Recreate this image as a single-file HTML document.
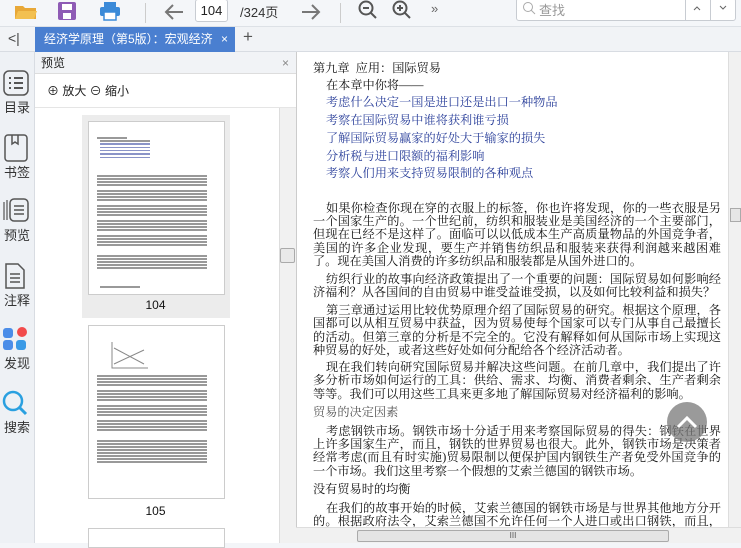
<!DOCTYPE html>
<html><head><meta charset="utf-8"><style>
*{margin:0;padding:0;box-sizing:border-box}
body{width:741px;height:543px;overflow:hidden;background:#f3f5f8;font-family:"Liberation Sans","Noto Sans CJK SC",sans-serif;position:relative}
.abs{position:absolute}
.tb{left:0;top:0;width:741px;height:27px;background:#f4f6f9;border-bottom:1px solid #dde1e6}
.tabbar{left:0;top:27px;width:741px;height:25px;background:#f1f3f6;border-bottom:1px solid #d8dce2}
.side{left:0;top:52px;width:35px;height:491px;background:#eef1f5;border-right:1px solid #d8dce2}
.sl{position:absolute;left:0;width:34px;text-align:center;font-size:13px;color:#333}
.prev{left:35px;top:52px;width:261px;height:491px;background:#fff}
.doc{left:296px;top:52px;width:432px;height:475px;background:#fff;border-left:1px solid #ccc}
.t{font-family:"Liberation Serif","Noto Serif CJK SC",serif;font-size:12.2px;color:#111;position:absolute;left:313px;width:408px;text-align:justify;text-align-last:justify;line-height:14px;height:14px;overflow:hidden}
.b{color:#2a3f9a;text-align-last:left}
.l{text-align-last:left}
.i{left:326px;width:395px}
.mini{position:absolute;height:1.5px;background:#777}
</style></head><body>
<div class="abs tb">
 <svg class="abs" style="left:14px;top:2px" width="24" height="18"><path d="M1 4h8l2 2h11v11H1z" fill="#e8a838"/><path d="M4 9h19l-3 8H1z" fill="#f3c050"/></svg>
 <svg class="abs" style="left:57px;top:1px" width="20" height="20"><rect x="1" y="1" width="18" height="18" rx="2" fill="#8e5bb5"/><rect x="5" y="3" width="10" height="6" fill="#fff"/><rect x="6" y="12" width="8" height="6" fill="#fff"/></svg>
 <svg class="abs" style="left:99px;top:1px" width="22" height="20"><rect x="5" y="1" width="12" height="6" fill="#3b8ad8"/><rect x="1" y="6" width="20" height="9" rx="2" fill="#3b8ad8"/><rect x="5" y="11" width="12" height="8" fill="#fff" stroke="#3b8ad8" stroke-width="1.5"/></svg>
 <div class="abs" style="left:145px;top:3px;width:1px;height:20px;background:#ccc"></div>
 <svg class="abs" style="left:163px;top:3px" width="22" height="18"><path d="M20 9H3M10 2L3 9l7 7" stroke="#777" stroke-width="2" fill="none"/></svg>
 <div class="abs" style="left:195px;top:-1px;width:33px;height:23px;background:#fff;border:1px solid #c8ccd2;border-radius:3px;font-size:13px;text-align:center;line-height:22px;color:#222">104</div>
 <div class="abs" style="left:240px;top:2px;font-size:13px;color:#333">/324页</div>
 <svg class="abs" style="left:300px;top:3px" width="22" height="18"><path d="M2 9h17M12 2l7 7-7 7" stroke="#777" stroke-width="2" fill="none"/></svg>
 <div class="abs" style="left:340px;top:3px;width:1px;height:20px;background:#ccc"></div>
 <svg class="abs" style="left:358px;top:0" width="20" height="20"><circle cx="8" cy="8" r="6.5" stroke="#555" stroke-width="2" fill="none"/><path d="M5 8h6M13 13l5 5" stroke="#555" stroke-width="2"/></svg>
 <svg class="abs" style="left:392px;top:0" width="20" height="20"><circle cx="8" cy="8" r="6.5" stroke="#555" stroke-width="2" fill="none"/><path d="M5 8h6M8 5v6M13 13l5 5" stroke="#555" stroke-width="2"/></svg>
 <div class="abs" style="left:431px;top:1px;font-size:13px;color:#666">»</div>
 <div class="abs" style="left:516px;top:-2px;width:220px;height:23px;background:#fff;border:1px solid #c8ccd2;border-radius:3px"></div>
 <svg class="abs" style="left:522px;top:1px" width="14" height="14"><circle cx="6" cy="6" r="4.5" stroke="#aaa" fill="none"/><path d="M9 9l4 4" stroke="#aaa"/></svg>
 <div class="abs" style="left:539px;top:0px;font-size:13px;color:#999">查找</div>
 <div class="abs" style="left:685px;top:-2px;width:1px;height:23px;background:#c8ccd2"></div>
 <div class="abs" style="left:710px;top:-2px;width:1px;height:23px;background:#c8ccd2"></div>
 <svg class="abs" style="left:692px;top:4px" width="10" height="8"><path d="M2 6l3-3 3 3" stroke="#666" fill="none"/></svg>
 <svg class="abs" style="left:718px;top:4px" width="10" height="8"><path d="M2 2l3 3 3-3" stroke="#666" fill="none"/></svg>
</div>
<div class="abs tabbar">
 <div class="abs" style="left:8px;top:3px;font-size:14px;color:#444">&lt;|</div>
 <div class="abs" style="left:35px;top:0;width:200px;height:25px;background:#4a7fd0;color:#fff;font-size:12px;line-height:25px;padding-left:9px;white-space:nowrap;overflow:hidden">经济学原理（第5版）：宏观经济<span class="abs" style="left:186px;top:0">×</span></div>
 <div class="abs" style="left:243px;top:0;font-size:17px;color:#555">+</div>
</div>
<div class="abs side">
 <svg class="abs" style="left:3px;top:18px" width="26" height="26"><rect x="1" y="1" width="24" height="24" rx="5" stroke="#555" stroke-width="1.5" fill="none"/><path d="M6 8h2M11 8h9M6 13h2M11 13h9M6 18h2M11 18h9" stroke="#555" stroke-width="2"/></svg>
 <div class="sl" style="top:45px">目录</div>
 <svg class="abs" style="left:4px;top:82px" width="24" height="28"><rect x="1" y="1" width="22" height="26" rx="3" stroke="#555" stroke-width="1.5" fill="none"/><path d="M8 1v9l3-2 3 2V1" stroke="#555" stroke-width="1.5" fill="none"/></svg>
 <div class="sl" style="top:110px">书签</div>
 <svg class="abs" style="left:3px;top:145px" width="26" height="26"><path d="M1 5v18M4 3v20" stroke="#555" stroke-width="1.2"/><rect x="7" y="2" width="18" height="22" rx="4" stroke="#555" stroke-width="1.5" fill="none"/><path d="M11 9h10M11 13h10M11 17h10" stroke="#555" stroke-width="1.5"/></svg>
 <div class="sl" style="top:173px">预览</div>
 <svg class="abs" style="left:4px;top:210px" width="22" height="28"><path d="M2 2h12l6 6v18H2z" stroke="#555" stroke-width="1.5" fill="none"/><path d="M6 12h10M6 16h10M6 20h10" stroke="#555" stroke-width="1.5"/></svg>
 <div class="sl" style="top:238px">注释</div>
 <svg class="abs" style="left:2px;top:274px" width="26" height="26"><rect x="1" y="2" width="10" height="10" rx="3" fill="#4b8de8"/><circle cx="20" cy="6" r="5" fill="#f24b4b"/><rect x="1" y="14" width="10" height="10" rx="3" fill="#4b8de8"/><rect x="14" y="14" width="10" height="10" rx="3" fill="#3a9ae6"/></svg>
 <div class="sl" style="top:301px">发现</div>
 <svg class="abs" style="left:2px;top:338px" width="26" height="28"><circle cx="11" cy="11" r="9" stroke="#2aa0e0" stroke-width="2.5" fill="none"/><path d="M18 18l6 6" stroke="#2aa0e0" stroke-width="3"/></svg>
 <div class="sl" style="top:365px">搜索</div>
</div>
<div class="abs prev">
 <div class="abs" style="left:0;top:0;width:261px;height:22px;background:#f1f3f6;border-bottom:1px solid #ddd;font-size:12px;line-height:22px;padding-left:6px;color:#222">预览<span class="abs" style="left:247px;top:0;color:#888">×</span></div>
 <div class="abs" style="left:12px;top:30px;font-size:12px;color:#222">⊕ 放大 ⊖ 缩小</div>
 <div class="abs" style="left:0;top:55px;width:261px;height:1px;background:#e5e5e5"></div>
 <div class="abs" style="left:244px;top:56px;width:17px;height:435px;background:#f1f1f1;border-left:1px solid #ddd"></div>
 <div class="abs" style="left:245px;top:196px;width:15px;height:15px;background:#e9e9e9;border:1px solid #aaa;border-radius:2px"></div>
 <div class="abs" style="left:47px;top:63px;width:148px;height:203px;background:#ececec"></div>
 <div class="abs" style="left:53px;top:69px;width:137px;height:174px;background:#fff;border:1px solid #ccc"></div>
 <div class="abs" style="left:0;top:246px;width:241px;text-align:center;font-size:12px;color:#111">104</div>
 <div class="abs" style="left:53px;top:273px;width:137px;height:174px;background:#fff;border:1px solid #ccc"></div>
 <div class="abs" style="left:0;top:452px;width:241px;text-align:center;font-size:12px;color:#111">105</div>
 <div class="abs" style="left:53px;top:476px;width:137px;height:20px;background:#fff;border:1px solid #ccc"></div>
</div>
<div class="abs doc"></div>
<div id="m"></div>
<div class="t l" style="top:61px">第九章&nbsp;&nbsp;应用：国际贸易</div>
<div class="t l i" style="top:78px">在本章中你将——</div>
<div class="t b i" style="top:95px">考虑什么决定一国是进口还是出口一种物品</div>
<div class="t b i" style="top:113px">考察在国际贸易中谁将获利谁亏损</div>
<div class="t b i" style="top:131px">了解国际贸易赢家的好处大于输家的损失</div>
<div class="t b i" style="top:149px">分析税与进口限额的福利影响</div>
<div class="t b i" style="top:166px">考察人们用来支持贸易限制的各种观点</div>
<div class="t i" style="top:201px">如果你检查你现在穿的衣服上的标签，你也许将发现，你的一些衣服是另</div>
<div class="t" style="top:214px">一个国家生产的。一个世纪前，纺织和服装业是美国经济的一个主要部门，</div>
<div class="t" style="top:227px">但现在已经不是这样了。面临可以以低成本生产高质量物品的外国竞争者，</div>
<div class="t" style="top:241px">美国的许多企业发现，要生产并销售纺织品和服装来获得利润越来越困难</div>
<div class="t l" style="top:254px">了。现在美国人消费的许多纺织品和服装都是从国外进口的。</div>
<div class="t i" style="top:272px">纺织行业的故事向经济政策提出了一个重要的问题：国际贸易如何影响经</div>
<div class="t l" style="top:285px">济福利？从各国间的自由贸易中谁受益谁受损，以及如何比较利益和损失？</div>
<div class="t i" style="top:303px">第三章通过运用比较优势原理介绍了国际贸易的研究。根据这个原理，各</div>
<div class="t" style="top:316px">国都可以从相互贸易中获益，因为贸易使每个国家可以专门从事自己最擅长</div>
<div class="t" style="top:330px">的活动。但第三章的分析是不完全的。它没有解释如何从国际市场上实现这</div>
<div class="t l" style="top:343px">种贸易的好处，或者这些好处如何分配给各个经济活动者。</div>
<div class="t i" style="top:360px">现在我们转向研究国际贸易并解决这些问题。在前几章中，我们提出了许</div>
<div class="t" style="top:373px">多分析市场如何运行的工具：供给、需求、均衡、消费者剩余、生产者剩余</div>
<div class="t l" style="top:387px">等等。我们可以用这些工具来更多地了解国际贸易对经济福利的影响。</div>
<div class="t l" style="top:405px;color:#555">贸易的决定因素</div>
<div class="t i" style="top:424px">考虑钢铁市场。钢铁市场十分适于用来考察国际贸易的得失：钢铁在世界</div>
<div class="t" style="top:437px">上许多国家生产，而且，钢铁的世界贸易也很大。此外，钢铁市场是决策者</div>
<div class="t" style="top:450px">经常考虑(而且有时实施)贸易限制以便保护国内钢铁生产者免受外国竞争的</div>
<div class="t l" style="top:464px">一个市场。我们这里考察一个假想的艾索兰德国的钢铁市场。</div>
<div class="t l" style="top:482px">没有贸易时的均衡</div>
<div class="t i" style="top:501px">在我们的故事开始的时候，艾索兰德国的钢铁市场是与世界其他地方分开</div>
<div class="t" style="top:514px">的。根据政府法令，艾索兰德国不允许任何一个人进口或出口钢铁，而且，</div>
<div class="abs" style="left:667px;top:402px;width:40px;height:40px;border-radius:50%;background:rgba(120,120,120,.75)"></div>
<svg class="abs" style="left:673px;top:408px" width="28" height="28"><path d="M5 19l9-9 9 9" stroke="#fff" stroke-width="3" fill="none"/></svg>
<div class="abs" style="left:728px;top:52px;width:13px;height:475px;background:#f1f1f1;border-left:1px solid #ddd"></div>
<div class="abs" style="left:730px;top:208px;width:11px;height:14px;background:#e6e6e6;border:1px solid #aaa"></div>
<div class="abs" style="left:296px;top:527px;width:445px;height:16px;background:#f1f1f1;border-top:1px solid #ddd"></div>
<div class="abs" style="left:357px;top:530px;width:312px;height:12px;background:#e4e4e4;border:1px solid #aaa;border-radius:2px;font-size:8px;text-align:center;color:#555">III</div>
<script>
var m=document.getElementById('m'),h='';
function ln(x,y,w,c){h+='<div class="mini" style="left:'+x+'px;top:'+y+'px;width:'+w+'px;background:'+(c||'#999')+'"></div>';}
ln(97,137,30);for(var i=0;i<6;i++)ln(100,140+i*3.3,50,i?'#8a94c8':'#999');
for(var p=0;p<5;p++){for(var k=0;k<4;k++)ln(97,175+p*15+k*3,110);}
for(var k=0;k<5;k++)ln(97,255+k*3,110);ln(100,286,40);
for(var p=0;p<4;p++){for(var k=0;k<4;k++)ln(97,375+p*15+k*3,110);}
for(var k=0;k<8;k++)ln(97,440+k*3,110);
m.innerHTML=h;
</script>
<svg class="abs" style="left:110px;top:340px" width="40" height="30"><path d="M2 2v26h36M4 8l30 16M4 24l30-14" stroke="#888" fill="none"/></svg>
</body></html>
